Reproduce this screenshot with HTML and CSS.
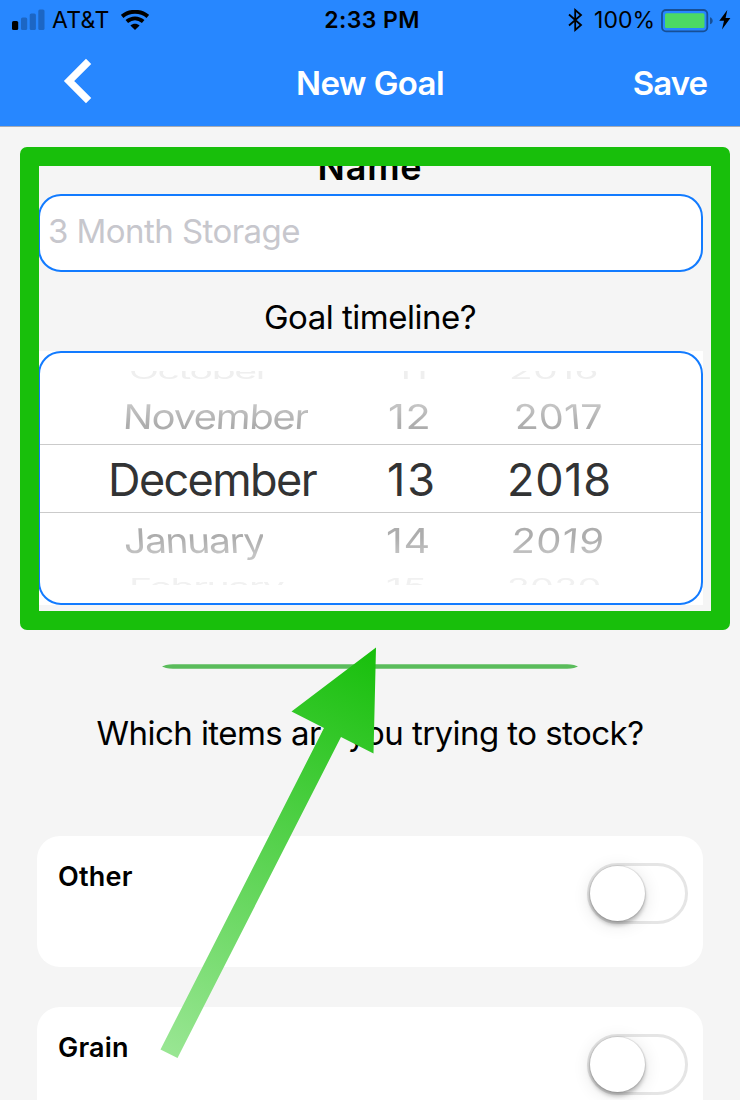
FILE: index.html
```html
<!DOCTYPE html>
<html lang="en">
<head>
<meta charset="utf-8">
<title>New Goal</title>
<link rel="stylesheet" href="styles.css">
</head>
<body>
<div class="screen">
  <header class="header">
    <div class="status">
      <div class="status-side">
        <svg class="signal" width="34" height="22" viewBox="0 0 34 22"><rect x="0" y="12" width="6.2" height="9" rx="1.6"/><g fill="#1c66c4"><rect x="9" y="8.5" width="6.2" height="12.5" rx="1.6"/><rect x="17.7" y="4.5" width="6.2" height="16.5" rx="1.6"/><rect x="26.3" y="0.5" width="6.2" height="20.5" rx="1.6"/></g></svg>
        <span class="carrier">AT&amp;T</span>
        <svg class="wifi" width="28" height="20" viewBox="0 0 28 20"><g fill="none" stroke="#000" stroke-width="3.9"><path d="M1.2 6.4C8.6 .2 19.4 .2 26.8 6.4"/><path d="M5.8 11.6C10.8 7.4 17.2 7.4 22.2 11.6"/></g><path d="M14 20L9.4 15.6C12.2 13.1 15.8 13.1 18.6 15.6Z"/></svg>
      </div>
      <span class="clock">2:33 PM</span>
      <div class="status-side status-end">
        <svg class="bluetooth" width="15" height="24" viewBox="0 0 15 24" fill="none" stroke="#000" stroke-width="1.8"><path d="M1 6.5L13 17L7.2 22V2L13 7L1 17.5"/></svg>
        <span class="percent">100%</span>
        <svg class="battery" width="53" height="24" viewBox="0 0 53 24"><rect x="1" y="1" width="45.3" height="21.3" rx="4" fill="none" stroke="#174f96" stroke-width="1.8"/><rect x="4" y="4.2" width="39.5" height="14.9" rx="1.5" fill="#4cd964"/><path d="M49 8.2C52.6 9.3 52.6 14.2 49 15.3Z" fill="#174f96"/></svg>
        <svg class="bolt" width="12" height="20" viewBox="0 0 12 20"><path d="M8.3 0L0.3 10.8H5L3 19.5L11.4 8H6.6Z"/></svg>
      </div>
    </div>
    <nav class="nav">
      <svg class="back" width="30" height="46" viewBox="0 0 30 46"><path d="M25.6 3.4L6.1 23L25.6 42.6" fill="none" stroke="#fff" stroke-width="7.4"/></svg>
      <h1 class="title">New Goal</h1>
      <span class="save">Save</span>
    </nav>
  </header>

  <main class="form">
    <h2 class="name-label"><span>Name</span></h2>
    <div class="input"><span>3 Month Storage</span></div>
    <div class="timeline-label"><span>Goal timeline?</span></div>
    <div class="picker-wrap">
      <div class="picker">
        <div class="row edge top"><span class="month">October</span><span class="day">11</span><span class="year">2016</span></div>
        <div class="row near above"><span class="month">November</span><span class="day">12</span><span class="year">2017</span></div>
        <div class="row selected"><span class="month">December</span><span class="day">13</span><span class="year">2018</span></div>
        <div class="row near below"><span class="month">January</span><span class="day">14</span><span class="year">2019</span></div>
        <div class="row edge bottom"><span class="month">February</span><span class="day">15</span><span class="year">2020</span></div>
      </div>
    </div>
    <svg class="divider" width="416" height="5" viewBox="0 0 416 5"><path d="M0 2.5L4 1Q7 .2 11 .2H405Q409 .2 412 1L416 2.5L412 4Q409 4.7 405 4.7H11Q7 4.7 4 4Z" fill="#5abc5b"/></svg>
    <div class="items-label"><span>Which items are you trying to stock?</span></div>
    <section class="card"><span class="item">Other</span><div class="switch"><div class="knob"></div></div></section>
    <section class="card"><span class="item">Grain</span><div class="switch"><div class="knob"></div></div></section>
  </main>

  <div class="highlight"></div>
  <svg class="arrow" width="740" height="1100" viewBox="0 0 740 1100">
    <defs><linearGradient id="fade" gradientUnits="userSpaceOnUse" x1="376" y1="648" x2="169" y2="1054"><stop offset="0" stop-color="#17bf0b"/><stop offset="1" stop-color="#99e693"/></linearGradient></defs>
    <path d="M376 647.5L291.5 711.5L324 728L160.5 1049.5L177.5 1058L341 737L373.5 753.5Z" fill="url(#fade)"/>
  </svg>
</div>
</body>
</html>
```
FILE: styles.css
```css
* { box-sizing: border-box; }
body { margin: 0; font-family: Inter, "Liberation Sans", sans-serif; color: #000; }
svg { display: block; flex: none; }
.screen { position: relative; width: 740px; height: 1100px; overflow: hidden; background: #f5f5f5; }

.header { height: 127px; background: #2787ff; border-bottom: 1px solid #a5abb5; }
.status { display: grid; grid-template-columns: 1fr auto 1fr; height: 41px; line-height: 41px; font-size: 23px; }
.status-side { display: flex; align-items: flex-start; padding-left: 12px; }
.status-end { justify-content: flex-end; padding: 0 9px 0 0; }
.signal { margin-top: 9px; }
.carrier { margin-left: 6px; letter-spacing: 0.3px; }
.wifi { margin: 10px 0 0 11px; }
.clock { padding-left: 4px; font-weight: 600; letter-spacing: 0.4px; }
.bluetooth { margin: 8px 11px 0 0; }
.battery { margin: 9px 5px 0 6px; }
.bolt { margin-top: 10px; }
.nav { display: grid; grid-template-columns: 1fr auto 1fr; height: 85px; line-height: 84px; color: #fff; }
.back { margin: 17px 0 0 63px; }
.title { margin: 0; font-size: 33px; font-weight: 600; letter-spacing: -0.6px; }
.save { justify-self: end; margin-right: 33px; font-size: 33px; font-weight: 600; letter-spacing: -1px; }

.form { padding: 23px 37px 0; }
.name-label { margin: 0 0 8px; line-height: 35px; padding-bottom: 1px; font-size: 36px; font-weight: 600; letter-spacing: 0.8px; text-align: center; }
.input { height: 78px; margin-left: 1px; padding-left: 8px; border: 2px solid #127bff; border-radius: 23px; background: #fff; color: #c7c7cd; font-size: 33px; letter-spacing: -0.55px; line-height: 71px; }
.timeline-label { margin-top: 25px; line-height: 40px; font-size: 33px; letter-spacing: -0.5px; text-align: center; }
.picker-wrap { margin: 14px 0 0 1px; background: #fff; }
.picker { height: 254px; padding-top: 18px; border: 2px solid #127bff; border-radius: 23px; color: #323334; font-size: 45px; }
.row { display: grid; white-space: nowrap; }
.row span { justify-self: start; transform-origin: 0 50%; }
.month { letter-spacing: -1.6px; }
.day, .year { letter-spacing: 0.7px; }

.selected { height: 69px; line-height: 69px; padding-left: 68px; grid-template-columns: 279px 120px 1fr; border-top: 1px solid #cbcbcb; border-bottom: 1px solid #cbcbcb; }
.selected .day { letter-spacing: 2px; }

.near { height: 64px; padding-left: 83px; grid-template-columns: 265px 126px 1fr; }
.near span { color: transparent; background: linear-gradient(#c4c4c4 30%, #adadad 65%); background-clip: text; -webkit-background-clip: text; }
.above { line-height: 73px; }
.above .month { transform: scale(0.89, 0.76) skewX(-3deg); }
.above .day { transform: scale(0.92, 0.76); }
.above .year { transform: scale(0.88, 0.76) skewX(4deg); }
.below { line-height: 53px; padding-left: 84px; grid-template-columns: 262px 125px 1fr; }
.below span { background-image: linear-gradient(#adadad 35%, #c4c4c4 70%); }
.below .month { transform: scale(0.87, 0.76) skewX(3deg); }
.below .day { transform: scale(0.92, 0.76); }
.below .year { transform: scale(0.89, 0.76) skewX(-4deg); }

.edge { height: 8px; overflow: hidden; color: #efefef; padding-left: 89px; line-height: 8px; grid-template-columns: 266px 114px 1fr; }
.edge .month { transform: scale(0.87, 0.48); }
.edge .day { transform: scale(0.88, 0.48); }
.edge .year { transform: scale(0.86, 0.48); }
.top { margin-bottom: 1px; }
.top span { margin-top: -5px; }
.bottom { grid-template-columns: 257px 121px 1fr; margin-top: 0; color: #f1f1f1; }
.bottom span { margin-top: 5px; }
.bottom .year { transform: scale(0.83, 0.48); }
.divider { margin: 59px auto 0; }
.items-label { margin-top: 44px; line-height: 40px; font-size: 33px; letter-spacing: -0.55px; text-align: center; }

.card { display: flex; justify-content: space-between; height: 131px; margin-bottom: 40px; padding: 27px 15px 0 21px; border-radius: 23px; background: #fff; }
.items-label + .card { margin-top: 83px; }
.item { line-height: 27px; font-size: 27px; font-weight: 600; letter-spacing: 0.2px; }
.switch { width: 101px; height: 61px; border: 3px solid #e5e5e5; border-radius: 31px; }
.knob { width: 55px; height: 55px; border-radius: 50%; background: #fff; box-shadow: 0 4px 4px rgba(0,0,0,0.24), 0 3px 18px rgba(0,0,0,0.12), 0 0 1px 1px rgba(0,0,0,0.1); }

.highlight { position: absolute; left: 20px; top: 147px; width: 710px; height: 483px; border: 19px solid #18bf0b; border-radius: 7px; }
.arrow { position: absolute; left: 0; top: 0; }
```
